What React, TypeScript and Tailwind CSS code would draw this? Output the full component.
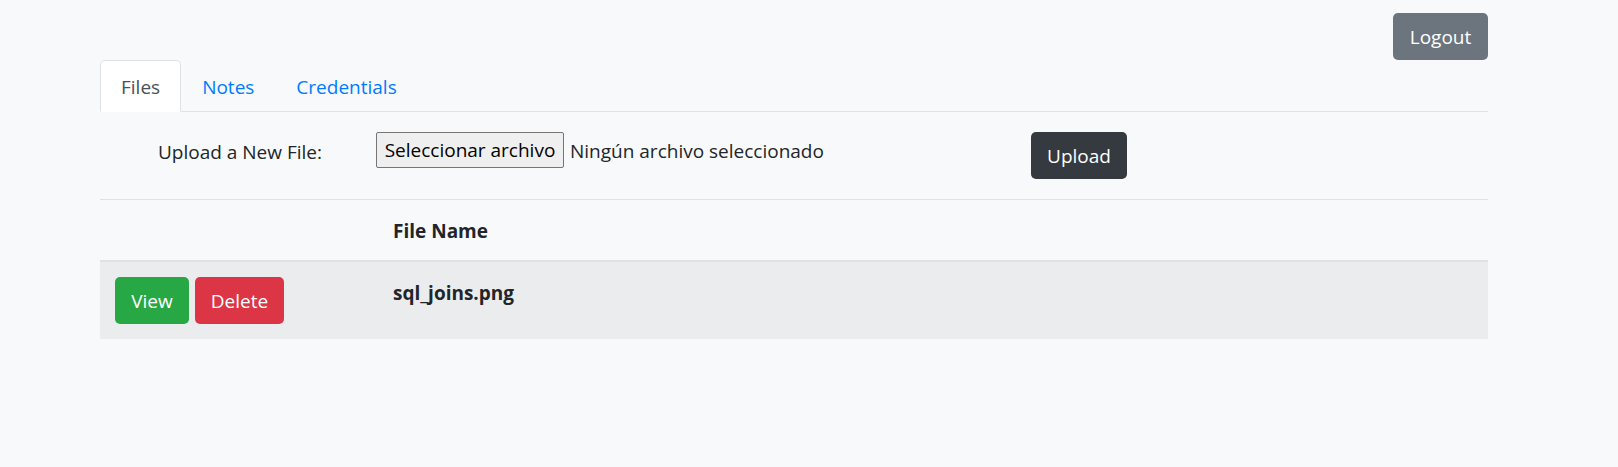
const font = { fontFamily: '"Open Sans", "Noto Sans", sans-serif' };

function Tab({ label, active }: { label: string; active?: boolean }) {
  if (active) {
    return (
      <div className="-mb-px h-[52px] rounded-t-[5px] border border-[#dee2e6] border-b-white bg-white px-[20px] pt-[11px] leading-[30px] text-[#495057]">
        {label}
      </div>
    );
  }
  return (
    <div className="-mb-px h-[52px] border border-transparent px-[20px] pt-[11px] leading-[30px] text-[#007bff]">
      {label}
    </div>
  );
}

export default function App() {
  return (
    <div className="min-h-screen w-full bg-[#f8f9fa] text-[19px] leading-[30px] text-[#212529]" style={font}>
      <div className="ml-[100px] w-[1388px]">
        <div className="flex justify-end pt-[13px]">
          <button className="h-[47px] w-[95px] rounded-[5px] bg-[#6c757d] pt-[1px] text-white">Logout</button>
        </div>

        <div className="flex border-b border-[#dee2e6]">
          <Tab label="Files" active />
          <Tab label="Notes" />
          <Tab label="Credentials" />
        </div>

        <div className="flex h-[88px] items-start border-b border-[#dee2e6] pt-[20px]">
          <div className="w-[276px] pl-[58px] pt-[5px]">Upload a New File:</div>
          <div className="flex w-[655px] items-center">
            <span className="h-[36px] w-[188px] rounded-[2px] border border-[#767676] bg-[#efefef] text-center leading-[34px] text-black">
              Seleccionar archivo
            </span>
            <span className="ml-[6px] mt-[2px]">Ningún archivo seleccionado</span>
          </div>
          <button className="h-[47px] w-[96px] rounded-[5px] bg-[#343a40] pt-[1px] text-white">Upload</button>
        </div>

        <table className="w-full border-collapse text-left">
          <thead>
            <tr className="border-b-2 border-[#dee2e6]">
              <th className="w-[278px] px-[15px] pt-[16px] pb-[14px]"></th>
              <th className="px-[15px] pt-[16px] pb-[14px] font-bold">File Name</th>
            </tr>
          </thead>
          <tbody>
            <tr className="bg-[#ebeced]">
              <td className="px-[15px] py-[15px] align-top">
                <div className="flex gap-[6px]">
                  <button className="h-[47px] w-[74px] rounded-[5px] bg-[#28a745] pt-[1px] text-white">View</button>
                  <button className="h-[47px] w-[89px] rounded-[5px] bg-[#dc3545] pt-[1px] text-white">Delete</button>
                </div>
              </td>
              <th className="px-[15px] pt-[16px] pb-[14px] align-top font-bold">sql_joins.png</th>
            </tr>
          </tbody>
        </table>
      </div>
    </div>
  );
}
